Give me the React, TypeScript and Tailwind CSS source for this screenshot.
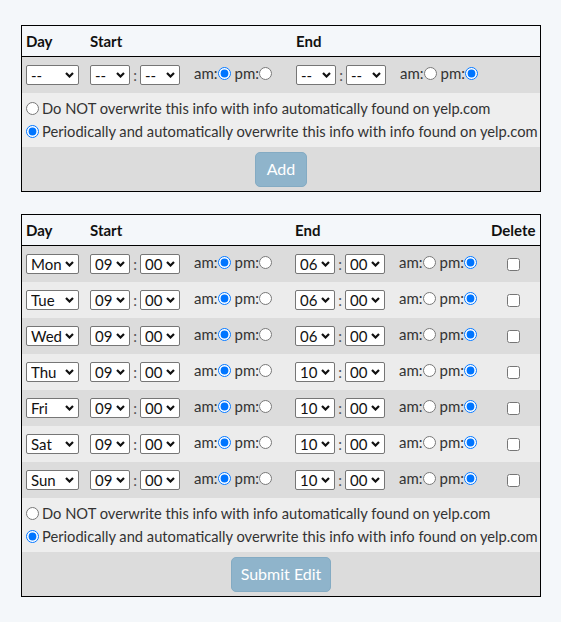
import React from "react";

const rows = [
  { day: "Mon", sh: "09", eh: "06" },
  { day: "Tue", sh: "09", eh: "06" },
  { day: "Wed", sh: "09", eh: "06" },
  { day: "Thu", sh: "09", eh: "10" },
  { day: "Fri", sh: "09", eh: "10" },
  { day: "Sat", sh: "09", eh: "10" },
  { day: "Sun", sh: "09", eh: "10" },
];

const dayOpts = ["--", "Mon", "Tue", "Wed", "Thu", "Fri", "Sat", "Sun"];
const hourOpts = ["--", "01", "02", "03", "04", "05", "06", "07", "08", "09", "10", "11", "12"];
const minOpts = ["--", "00", "15", "30", "45"];

// native select without the browser arrow; chevron drawn on top
function Sel({ opts, value, w }: { opts: string[]; value: string; w: string }) {
  return (
    <span className={"relative inline-block " + w}>
      <select
        defaultValue={value}
        className="appearance-none w-full h-[20px] border border-[#767676] rounded-[2px] bg-white text-[15px] leading-[18px] text-[#111] pl-[4px] pr-[14px]"
      >
        {opts.map((o) => (
          <option key={o}>{o}</option>
        ))}
      </select>
      <svg
        width="9"
        height="6"
        viewBox="0 0 9 6"
        className="absolute right-[5px] top-[8px] pointer-events-none"
      >
        <polyline points="1,1 4.5,4.5 8,1" fill="none" stroke="#111" strokeWidth="2.2" />
      </svg>
    </span>
  );
}

function Time({ h, name, am, first }: { h: string; name: string; am: boolean; first?: boolean }) {
  return (
    <div className="flex items-center">
      <Sel opts={hourOpts} value={h} w="w-[40px]" />
      <span className="w-[10px] text-center text-[#555]">:</span>
      <Sel opts={minOpts} value={first ? "--" : "00"} w="w-[40px]" />
      <span className="ml-[14px] flex items-center -mt-[4px]">
        am:
        <input type="radio" name={name} defaultChecked={am} className="w-[13px] h-[13px] mr-[4px]" />
        pm:
        <input type="radio" name={name} defaultChecked={!am} className="w-[13px] h-[13px]" />
      </span>
    </div>
  );
}

function Overwrite({ name }: { name: string }) {
  return (
    <div className="bg-[#eeeeee] pl-[4px] py-[4px] leading-[23px] text-[14.7px] whitespace-nowrap">
      <label className="flex items-center gap-[3px] h-[23px]">
        <input type="radio" name={name} className="w-[13px] h-[13px]" />
        Do NOT overwrite this info with info automatically found on yelp.com
      </label>
      <label className="flex items-center gap-[3px] h-[23px]">
        <input type="radio" name={name} defaultChecked className="w-[13px] h-[13px]" />
        Periodically and automatically overwrite this info with info found on yelp.com
      </label>
    </div>
  );
}

function Btn({ label, w }: { label: string; w: string }) {
  return (
    <button className={"h-[35px] rounded-[5px] bg-[#8fb4cb] border border-[#84abc3] text-white text-[16px] " + w}>
      {label}
    </button>
  );
}

function Header({ del }: { del?: boolean }) {
  return (
    <div className="flex items-center h-[31px] border-b border-black font-bold text-[#111] text-[15px]">
      <div className="w-[68px] pl-[4px]">Day</div>
      <div className={del ? "w-[205px]" : "w-[206px]"}>Start</div>
      <div className="w-[196px]">End</div>
      {del && <div className="flex-1">Delete</div>}
    </div>
  );
}

export default function App() {
  return (
    <div className="min-h-screen bg-[#f4f7fa] pt-[25px] pl-[21px] text-[15px] text-[#333] font-['Lato',sans-serif]">
      <div className="w-[520px] border border-black">
        <Header />
        <div className="flex items-center h-[36px] bg-[#dcdcdc]">
          <div className="w-[68px] pl-[4px]">
            <Sel opts={dayOpts} value="--" w="w-[53px]" />
          </div>
          <div className="w-[206px]">
            <Time h="--" name="n-s" am first />
          </div>
          <div className="w-[196px]">
            <Time h="--" name="n-e" am={false} first />
          </div>
        </div>
        <Overwrite name="ow1" />
        <div className="bg-[#dcdcdc] h-[44px] flex items-center justify-center">
          <Btn label="Add" w="w-[52px]" />
        </div>
      </div>

      <div className="w-[520px] border border-black mt-[22px]">
        <Header del />
        {rows.map((r, i) => (
          <div key={r.day} className={"flex items-center h-[36px] " + (i % 2 === 0 ? "bg-[#dcdcdc]" : "bg-[#ececec]")}>
            <div className="w-[68px] pl-[4px]">
              <Sel opts={dayOpts} value={r.day} w="w-[53px]" />
            </div>
            <div className="w-[205px]">
              <Time h={r.sh} name={r.day + "-s"} am />
            </div>
            <div className="w-[196px]">
              <Time h={r.eh} name={r.day + "-e"} am={false} />
            </div>
            <div className="w-[45px] flex justify-center">
              <input type="checkbox" className="w-[13px] h-[13px]" />
            </div>
          </div>
        ))}
        <Overwrite name="ow2" />
        <div className="bg-[#dcdcdc] h-[44px] flex items-center justify-center">
          <Btn label="Submit Edit" w="w-[100px]" />
        </div>
      </div>
    </div>
  );
}
